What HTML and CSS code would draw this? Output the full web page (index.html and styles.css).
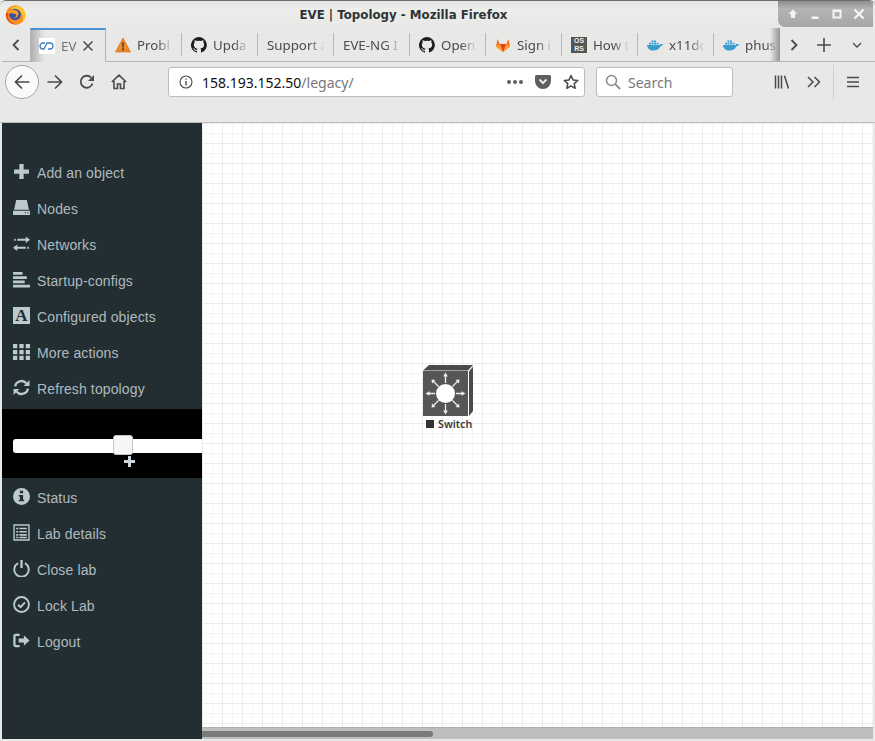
FILE: index.html
```html
<!DOCTYPE html>
<html lang="en">

<head>
    <meta charset="UTF-8" />
    <title>EVE | Topology - Mozilla Firefox</title>
    <link rel="stylesheet" href="styles.css">
</head>

<body>
    <div class="window">
        <header class="titlebar">
            <svg class="ff-logo" viewBox="0 0 21 21" width="21" height="21">
                <circle cx="10.500" cy="11" r="9.800" fill="#f7901e" />
                <path d="M4 1.500c.3 1.500 1 2.400 2 3 2-1.800 5-3 7.500-2.500 4 1 7 4.500 7 9 0 3-1.500 5.800-3.500 7.500 1.500-2.500 1.500-6 .2-8.500-.8-1.800-2.200-3-3.700-4-2-.5-4.500-1-6 .5z" fill="#fcc52d" />
                <path d="M1 9c-.5 4 1.500 8 5 10.200 2 1 4.500 1.500 7 1-4 0-8-2-9.500-6C3 12 3 10.500 3.500 9z" fill="#e6452c" />
                <circle cx="10" cy="10.500" r="5.800" fill="#3c4fa3" />
                <path d="M3.500 7.500c2-1.500 6-2.200 8-1 2 1.200 2.500 3.500 1.300 5.500-1 1.700-3.500 2.500-5.300 1.700 2 .1 3.500-.7 3.800-2 .2-1-.5-1.800-1.800-2-2-.3-4.300-.8-6 .3z" fill="#f9a01f" />
            </svg>
            <div class="title">EVE | Topology - Mozilla Firefox</div>
            <div class="wm-buttons">
                <svg viewBox="0 0 12 12" width="12" height="12"><path d="M6 1.500l4.500 4.500H8v4H4V6H1.500z" fill="#f4f4f4" /></svg>
                <svg viewBox="0 0 12 12" width="12" height="12"><path d="M2.500 8.500h7V11h-7z" fill="#f4f4f4" /></svg>
                <svg viewBox="0 0 12 12" width="12" height="12"><path d="M1.500 1.500h9v9h-9z M3.500 4v4.500h5V4z" fill="#f4f4f4" fill-rule="evenodd" /></svg>
                <svg viewBox="0 0 12 12" width="12" height="12"><path d="M1.500 1.500l9 9M10.500 1.500l-9 9" stroke="#f4f4f4" stroke-width="2.400" /></svg>
            </div>
        </header>

        <div class="tabbar">
            <button class="tab-nav tab-nav-left">
                <svg viewBox="0 0 12 12" width="12" height="12"><path d="M8.500 1L3.500 6l5 5" fill="none" stroke="#4a4a4f" stroke-width="1.800" /></svg>
            </button>
            <div class="tab tab-active">
                <span class="fav fav-eve">
                    <svg viewBox="0 0 16 12" width="16" height="12"><path d="M6 3H4a3 3 0 0 0 0 6h1l3-6h3a3 3 0 0 1 0 6h-2" fill="none" stroke="#3b7fc4" stroke-width="1.300" /></svg>
                </span>
                <span class="tab-label tab-label-short">EV</span>
                <svg class="tab-close" viewBox="0 0 10 10" width="10" height="10"><path d="M.5.500l9 9M9.500.500l-9 9" stroke="#4a4a4f" stroke-width="1.500" /></svg>
            </div>
            <div class="tab">
                <svg class="fav" viewBox="0 0 16 16" width="16" height="16">
                    <path d="M8 1l7.500 14H.5z" fill="#f08a24" stroke="#c9651a" stroke-width=".6" />
                    <path d="M7.200 5.500h1.600l-.3 5h-1z M7.100 11.500h1.800v1.800H7.100z" fill="#3a2a1a" />
                </svg>
                <span class="tab-label">Probl</span>
            </div>
            <div class="tab">
                <svg class="fav" viewBox="0 0 16 16" width="16" height="16"><use href="#gh" /></svg>
                <span class="tab-label">Upda</span>
            </div>
            <div class="tab"><span class="tab-label">Support a</span></div>
            <div class="tab"><span class="tab-label">EVE-NG I</span></div>
            <div class="tab">
                <svg class="fav" viewBox="0 0 16 16" width="16" height="16"><use href="#gh" /></svg>
                <span class="tab-label">Open</span>
            </div>
            <div class="tab">
                <svg class="fav" viewBox="0 0 16 16" width="16" height="16">
                    <path d="M8 15L1 9.500 2.500 2l2.300 5h6.400L13.500 2 15 9.500z" fill="#fc6d26" />
                    <path d="M8 15L4.800 7h6.400z" fill="#e24329" />
                    <path d="M1 9.500L4.800 7 8 15zM15 9.500L11.200 7 8 15z" fill="#fca326" />
                </svg>
                <span class="tab-label">Sign i</span>
            </div>
            <div class="tab">
                <span class="fav fav-osrs">OS<br>RS</span>
                <span class="tab-label">How t</span>
            </div>
            <div class="tab">
                <svg class="fav" viewBox="0 0 16 16" width="16" height="16"><use href="#whale" /></svg>
                <span class="tab-label">x11do</span>
            </div>
            <div class="tab tab-last">
                <svg class="fav" viewBox="0 0 16 16" width="16" height="16"><use href="#whale" /></svg>
                <span class="tab-label">phusi</span>
            </div>
            <button class="tab-nav tab-nav-right">
                <svg viewBox="0 0 12 12" width="12" height="12"><path d="M3.500 1l5 5-5 5" fill="none" stroke="#4a4a4f" stroke-width="1.800" /></svg>
            </button>
            <button class="tab-nav tab-nav-plus">
                <svg viewBox="0 0 14 14" width="14" height="14"><path d="M7 0v14M0 7h14" stroke="#4a4a4f" stroke-width="1.600" /></svg>
            </button>
            <button class="tab-nav tab-nav-list">
                <svg viewBox="0 0 10 6" width="10" height="6"><path d="M1 1l4 4 4-4" fill="none" stroke="#4a4a4f" stroke-width="1.300" /></svg>
            </button>
        </div>

        <nav class="navbar">
            <button class="back-btn">
                <svg viewBox="0 0 16 16" width="16" height="16"><path d="M8 1.500L1.500 8 8 14.500M2 8h13.500" fill="none" stroke="#4a4a4f" stroke-width="1.700" /></svg>
            </button>
            <button class="nav-btn nav-forward">
                <svg viewBox="0 0 16 16" width="16" height="16"><path d="M8 1.500L14.500 8 8 14.500M14 8H.5" fill="none" stroke="#4a4a4f" stroke-width="1.700" /></svg>
            </button>
            <button class="nav-btn nav-reload">
                <svg viewBox="0 0 16 16" width="16" height="16"><path d="M13.500 9.500A6 6 0 1 1 12 3.500" fill="none" stroke="#4a4a4f" stroke-width="1.800" /><path d="M15 1v6H9z" fill="#4a4a4f" /></svg>
            </button>
            <button class="nav-btn nav-home">
                <svg viewBox="0 0 16 16" width="16" height="16"><path d="M.8 8L8 1.200 15.200 8M3 7v7.500h3.500V10h3v4.500H13V7" fill="none" stroke="#4a4a4f" stroke-width="1.600" /></svg>
            </button>
            <div class="urlbar">
                <svg class="url-info" viewBox="0 0 14 14" width="14" height="14">
                    <circle cx="7" cy="7" r="6" fill="none" stroke="#4a4a4f" stroke-width="1.100" />
                    <path d="M6.300 6h1.400v4.500H6.300zM6.300 3.400h1.400v1.400H6.300z" fill="#4a4a4f" />
                </svg>
                <span class="url-text">158.193.152.50<span class="url-path">/legacy/</span></span>
                <span class="url-dots"><i></i><i></i><i></i></span>
                <svg class="url-pocket" viewBox="0 0 16 16" width="16" height="16">
                    <path d="M1.500 1h13A1.500 1.500 0 0 1 16 2.500V7a8 8 0 0 1-16 0V2.500A1.500 1.500 0 0 1 1.500 1z" fill="#5f5f62" />
                    <path d="M4.500 5.500L8 9l3.500-3.500" fill="none" stroke="#e8e8e7" stroke-width="2" />
                </svg>
                <svg class="url-star" viewBox="0 0 16 16" width="16" height="16"><path d="M8 1.500l2 4.400 4.800.5-3.600 3.200 1 4.700L8 11.900l-4.200 2.400 1-4.700L1.200 6.400 6 5.900z" fill="none" stroke="#4a4a4f" stroke-width="1.500" stroke-linejoin="round" /></svg>
            </div>
            <div class="searchbar">
                <svg viewBox="0 0 16 16" width="16" height="16"><circle cx="6.500" cy="6.500" r="5" fill="none" stroke="#8a8a8a" stroke-width="1.500" /><path d="M10.200 10.200L15 15" stroke="#8a8a8a" stroke-width="1.800" /></svg>
                <span>Search</span>
            </div>
            <button class="nav-btn nav-library">
                <svg viewBox="0 0 16 16" width="16" height="16"><path d="M1.500 1.500v13M4.500 1.500v13M7.500 1.500v13M10.500 1.700l4 12.800" fill="none" stroke="#4a4a4f" stroke-width="1.500" /></svg>
            </button>
            <button class="nav-btn nav-more">
                <svg viewBox="0 0 14 12" width="14" height="12"><path d="M1 1l5 5-5 5M7.500 1l5 5-5 5" fill="none" stroke="#4a4a4f" stroke-width="1.500" /></svg>
            </button>
            <span class="nav-sep"></span>
            <button class="nav-btn nav-menu">
                <svg viewBox="0 0 14 12" width="14" height="12"><path d="M1 1.500h12M1 6h12M1 10.500h12" stroke="#4a4a4f" stroke-width="1.500" /></svg>
            </button>
        </nav>

        <main class="page">
            <aside class="sidebar">
                <ul class="menu menu-top">
                    <li>
                        <svg viewBox="0 0 16 16"><path d="M6 1h4v5h5v4h-5v5H6v-5H1V6h5z" fill="currentColor" /></svg>
                        Add an object
                    </li>
                    <li>
                        <svg viewBox="0 0 16 16"><path d="M3 1h10l2 9H1z M0 11h16v4H0z" fill="currentColor" /><path d="M11 13h1M13.500 13h1" stroke="#232e33" stroke-width="1" /></svg>
                        Nodes
                    </li>
                    <li>
                        <svg viewBox="0 0 16 16"><path d="M4 3.500h8V1.500l4 3-4 3v-2H4zM1 3.500h1.500v2H1zM12 9v2h-8V9l-4 3 4 3v-2h8zM13.500 11H15v2h-1.500z" fill="currentColor" /></svg>
                        Networks
                    </li>
                    <li>
                        <svg viewBox="0 0 16 16"><path d="M0 1h9v2.500H0zM0 5h13v2.500H0zM0 9h11v2.500H0zM0 13h16v2.500H0z" fill="currentColor" /></svg>
                        Startup-configs
                    </li>
                    <li>
                        <span class="icon-font">A</span>
                        Configured objects
                    </li>
                    <li>
                        <svg viewBox="0 0 16 16"><path d="M0 1h4v4H0zM6 1h4v4H6zM12 1h4v4h-4zM0 6.500h4v4H0zM6 6.500h4v4H6zM12 6.500h4v4h-4zM0 12h4v4H0zM6 12h4v4H6zM12 12h4v4h-4z" fill="currentColor" /></svg>
                        More actions
                    </li>
                    <li>
                        <svg viewBox="0 0 16 16"><path d="M2 7a6 6 0 0 1 10.500-3M14 9a6 6 0 0 1-10.500 3" fill="none" stroke="currentColor" stroke-width="2.200" /><path d="M15.500 1v5.500H10zM.5 15V9.500H6z" fill="currentColor" /></svg>
                        Refresh topology
                    </li>
                </ul>

                <div class="zoom-panel">
                    <div class="zoom-track"></div>
                    <div class="zoom-thumb"></div>
                    <svg class="zoom-plus" viewBox="0 0 11 11" width="11" height="11"><path d="M4 0h3v4h4v3H7v4H4V7H0V4h4z" fill="#c8d6dc" /></svg>
                </div>

                <ul class="menu">
                    <li>
                        <svg viewBox="0 0 16 16"><path fill-rule="evenodd" d="M8 0a8 8 0 1 1 0 16A8 8 0 0 1 8 0zM6.500 2.500v2.500h3V2.500zM5.500 6.500V8h1v3h-1v1.500h5V11h-1V6.500z" fill="currentColor" /></svg>
                        Status
                    </li>
                    <li>
                        <svg viewBox="0 0 16 16"><path d="M1 1h14v14H1z" fill="none" stroke="currentColor" stroke-width="1.300" /><path d="M3 3.500h2v1.500H3zM6 3.500h7v1.500H6zM3 6.500h2V8H3zM6 6.500h7V8H6zM3 9.500h2V11H3zM6 9.500h7V11H6zM3 12h2v1.300H3zM6 12h7v1.300H6z" fill="currentColor" /></svg>
                        Lab details
                    </li>
                    <li>
                        <svg viewBox="0 0 16 16"><path d="M4.800 3a6.800 6.800 0 1 0 6.400 0" fill="none" stroke="currentColor" stroke-width="1.800" /><path d="M8 0v7.500" stroke="currentColor" stroke-width="2.200" /></svg>
                        Close lab
                    </li>
                    <li>
                        <svg viewBox="0 0 16 16"><circle cx="8" cy="8" r="7" fill="none" stroke="currentColor" stroke-width="1.800" /><path d="M4.800 8.200l2.300 2.300 4.200-4.500" fill="none" stroke="currentColor" stroke-width="1.800" /></svg>
                        Lock Lab
                    </li>
                    <li>
                        <svg viewBox="0 0 18 16"><path d="M7 2H3a1.500 1.500 0 0 0-1.500 1.500v9A1.500 1.500 0 0 0 3 14h4" fill="none" stroke="currentColor" stroke-width="2.400" /><path d="M6 6h5.500V2.500L17.500 8l-6 5.500V10H6z" fill="currentColor" /></svg>
                        Logout
                    </li>
                </ul>
            </aside>

            <section class="canvas-wrap">
                <div class="canvas">
                    <div class="node">
                        <svg class="node-icon" viewBox="0 0 50 52" width="50" height="52">
                            <path d="M0 5.500L6 0h44l-5 5.500z" fill="#4a4a4a" />
                            <path d="M46 6.500L50 1.500V46l-4 5z" fill="#4a4a4a" />
                            <path d="M0 6h45v45H0z" fill="#565656" />
                            <path d="M22.500 11v7M22.500 39v7M6 28.500h6M33 28.500h6M15.500 21.500l-6-6M29.500 21.500l6-6M15.500 35.500l-6 6M29.500 35.500l6 6" stroke="#eee" stroke-width="1.300" />
                            <path d="M22.500 7.500l-2.300 4h4.600zM22.500 49.500l-2.300-4h4.600zM2.500 28.500l4-2.300v4.600zM42.500 28.500l-4-2.300v4.600zM8.500 14.500l4 .5-3.500 3.500zM36.500 14.500l-4 .5 3.500 3.500zM8.500 42.500l4-.5-3.500-3.500zM36.500 42.500l-4-.5 3.500-3.500z" fill="#eee" />
                            <circle cx="22.500" cy="28.500" r="9.500" fill="#fff" />
                        </svg>
                        <div class="node-label"><span class="node-state"></span>Switch</div>
                    </div>
                </div>
                <div class="scrollbar"><div class="scroll-thumb"></div></div>
            </section>
        </main>
    </div>

    <svg class="defs" width="0" height="0">
        <defs>
            <symbol id="gh" viewBox="0 0 16 16">
                <path d="M8 0a8 8 0 0 0-2.500 15.600c.4.100.5-.2.500-.4v-1.400c-2.200.5-2.700-1-2.700-1-.4-.9-.9-1.200-.9-1.200-.7-.5.100-.5.100-.5.800.1 1.200.8 1.200.8.700 1.200 1.900.9 2.300.7.100-.5.300-.9.500-1.100-1.800-.2-3.600-.9-3.600-4 0-.9.300-1.600.8-2.100-.1-.2-.4-1 .1-2.100 0 0 .7-.2 2.200.8a7.500 7.500 0 0 1 4 0c1.500-1 2.200-.8 2.200-.8.400 1.100.2 1.900.1 2.100.5.600.8 1.300.8 2.100 0 3.100-1.900 3.700-3.700 3.900.3.300.6.800.6 1.500v2.200c0 .2.100.5.600.4A8 8 0 0 0 8 0z" fill="#1b1f23" />
            </symbol>
            <symbol id="whale" viewBox="0 0 16 16">
                <path d="M0 8h12.500c.4-.8 1.500-1.200 3.500-.8-.5 1.500-1.500 2-2.500 2C12.300 12 10 13.500 6.500 13.500 2.500 13.500.3 11.500 0 8z" fill="#3a9fd0" />
                <path d="M2 5.800h2v1.700H2zM4.500 5.800h2v1.700h-2zM7 5.800h2v1.700H7zM4.500 3.600h2v1.700h-2zM7 3.600h2v1.700H7zM9.500 5.800h2v1.700h-2z" fill="#3a9fd0" />
            </symbol>
        </defs>
    </svg>
</body>

</html>
```

FILE: styles.css
```css
html,
body {
    margin: 0;
    padding: 0;
    background-color: #e8e8e7;
}

button {
    margin: 0;
    padding: 0;
    border: 0;
    background: none;
    display: flex;
    align-items: center;
    justify-content: center;
}

.defs {
    position: absolute;
}

.window {
    width: 875px;
    height: 741px;
    overflow: hidden;
    display: flex;
    flex-direction: column;
    box-sizing: border-box;
    background-color: #e8e8e7;
    border-top: 1px solid #6e6e6e;
    border-radius: 6px 6px 0 0;
    font-family: "Noto Sans", sans-serif;
}

/* title bar */
.titlebar {
    height: 27px;
    flex: none;
    display: flex;
    align-items: flex-start;
    position: relative;
    background: linear-gradient(#e4e4e3, #ededec 30%, #e8e8e7);
}

.ff-logo {
    margin: 3px 0 0 5px;
}

.title {
    position: absolute;
    left: 0;
    right: 68px;
    top: 7px;
    text-align: center;
    font-family: "DejaVu Sans", sans-serif;
    font-size: 11.800px;
    font-weight: bold;
    color: #2e3436;
}

.wm-buttons {
    position: absolute;
    right: 2px;
    top: 0;
    width: 95px;
    height: 26px;
    box-sizing: border-box;
    padding-left: 9px;
    display: flex;
    align-items: center;
    gap: 10px;
    background: linear-gradient(#8e8e8e, #b4b4b4 30%, #a6a6a6);
    border-radius: 0 0 0 7px;
}

/* tabs */
.tabbar {
    height: 34px;
    flex: none;
    display: flex;
    box-sizing: border-box;
    border-bottom: 1px solid #b4b4b4;
    margin-left: 2px;
}

.tab-nav {
    flex: none;
    height: 33px;
}

.tab-nav-left {
    width: 28px;
}

.tab-nav-right {
    width: 28px;
}

.tab-nav-plus {
    width: 32px;
}

.tab-nav-list {
    width: 33px;
}

.tab {
    width: 76px;
    flex: none;
    height: 23px;
    margin-top: 5px;
    box-sizing: border-box;
    padding-left: 9px;
    display: flex;
    align-items: center;
    gap: 6px;
    border-right: 1px solid #b8b8b8;
    font-size: 13.300px;
    color: #4a4a4f;
    position: relative;
}

.tab-last {
    width: 66px;
    border-right: 0;
}

/* shadow where the tab strip scrolls under the arrow */
.tab-last::after {
    content: "";
    position: absolute;
    right: 0;
    top: -5px;
    width: 10px;
    height: 33px;
    background: linear-gradient(90deg, rgba(120, 120, 120, 0), rgba(120, 120, 120, .75));
}

.tab-active {
    margin-top: 0;
    margin-bottom: -1px;
    height: 34px;
    padding-left: 8px;
    gap: 6px;
    border-top: 2px solid #4a90d9;
    border-left: 1px solid #b4b4b4;
    border-right: 1px solid #b4b4b4;
    background: linear-gradient(90deg, #b0b0b0, #e8e8e7 14px);
}

.fav {
    flex: none;
    width: 16px;
    height: 16px;
}

.fav-eve {
    background-color: #fff;
    display: flex;
    align-items: center;
    justify-content: center;
}

.fav-osrs {
    box-sizing: border-box;
    background-color: #555;
    color: #eee;
    font-family: "Liberation Sans", sans-serif;
    font-size: 7px;
    font-weight: bold;
    line-height: 8px;
    text-align: center;
}

.tab-label {
    flex: 1;
    min-width: 0;
    white-space: nowrap;
    color: #4a4a4f;
    -webkit-mask-image: linear-gradient(270deg, transparent 8px, #000 24px);
    mask-image: linear-gradient(270deg, transparent 8px, #000 24px);
}

.tab-last .tab-label {
    -webkit-mask-image: linear-gradient(270deg, transparent 1px, #000 14px);
    mask-image: linear-gradient(270deg, transparent 1px, #000 14px);
}

.tab-label-short {
    flex: none;
    width: 16px;
    opacity: .75;
    -webkit-mask-image: none;
    mask-image: none;
}

.tab-close {
    flex: none;
}

/* toolbar */
.navbar {
    height: 61px;
    flex: none;
    box-sizing: border-box;
    padding: 3px 0 0 5px;
    display: flex;
    align-items: flex-start;
    border-bottom: 1px solid #bcbcbc;
}

.back-btn {
    width: 34px;
    height: 34px;
    flex: none;
    box-sizing: border-box;
    background-color: #fafafa;
    border: 1px solid #a8a8a8;
    border-radius: 50%;
}

.nav-btn {
    flex: none;
    width: 32px;
    height: 34px;
}

.urlbar {
    width: 417px;
    height: 30px;
    flex: none;
    margin: 2px 0 0 33px;
    box-sizing: border-box;
    padding: 0 5px 0 10px;
    display: flex;
    align-items: center;
    background-color: #fff;
    border: 1px solid #bcbcbc;
    border-radius: 3px;
    font-size: 14px;
}

.url-text {
    margin-left: 9px;
    flex: 1;
    color: #111;
}

.url-path {
    color: #77777a;
}

.url-dots {
    display: flex;
    gap: 2px;
    margin-right: 12px;
}

.url-dots i {
    width: 4px;
    height: 4px;
    border-radius: 50%;
    background-color: #5f5f62;
}

.url-pocket {
    margin-right: 12px;
}

.searchbar {
    width: 137px;
    height: 30px;
    flex: none;
    margin: 2px 37px 0 11px;
    box-sizing: border-box;
    padding-left: 8px;
    display: flex;
    align-items: center;
    gap: 7px;
    background-color: #fff;
    border: 1px solid #bcbcbc;
    border-radius: 3px;
    font-size: 14px;
    color: #77777a;
}

.nav-library {
    width: 24px;
}

.nav-more {
    width: 39px;
}

.nav-sep {
    width: 1px;
    height: 34px;
    flex: none;
    background-color: #cfcfcf;
}

.nav-menu {
    width: 38px;
}

/* page area */
.page {
    flex: 1;
    min-height: 0;
    display: flex;
    padding: 0 2px 2px;
}

.sidebar {
    width: 200px;
    flex: none;
    background-color: #232e33;
    box-sizing: border-box;
    padding-top: 32px;
}

.menu {
    list-style: none;
    margin: 0;
    padding: 2px 0 0;
    font-family: "Liberation Sans", sans-serif;
    font-size: 14px;
    letter-spacing: .12px;
    color: #aebabf;
}

.menu-top {
    padding: 0 0 2px;
}

.menu li {
    height: 36px;
    padding-left: 11px;
    display: flex;
    align-items: center;
    gap: 7px;
}

.menu svg {
    width: 17px;
    height: 17px;
    flex: none;
    margin-top: -4px;
    color: #bccacf;
}

.icon-font {
    width: 17px;
    height: 17px;
    flex: none;
    margin-top: -4px;
    background-color: #bccacf;
    color: #232e33;
    font-family: "Liberation Serif", serif;
    font-size: 17px;
    font-weight: bold;
    line-height: 17px;
    text-align: center;
}

.zoom-panel {
    height: 69px;
    background-color: #000;
    position: relative;
}

.zoom-track {
    position: absolute;
    left: 11px;
    right: 0;
    top: 30px;
    height: 14px;
    background-color: #fff;
    border-radius: 3px 0 0 3px;
}

.zoom-thumb {
    position: absolute;
    left: 111px;
    top: 26px;
    width: 20px;
    height: 20px;
    box-sizing: border-box;
    background-color: #f6f6f6;
    border: 1px solid #c5c5c5;
    border-radius: 3px;
}

.zoom-plus {
    position: absolute;
    left: 122px;
    top: 47px;
}

.canvas-wrap {
    flex: 1;
    min-width: 0;
    display: flex;
    flex-direction: column;
}

.canvas {
    flex: 1;
    position: relative;
    background-color: #fff;
    background-image:
        linear-gradient(90deg, #ececec 1px, transparent 1px),
        linear-gradient(#ececec 1px, transparent 1px),
        linear-gradient(90deg, #f4f4f4 1px, transparent 1px),
        linear-gradient(#f4f4f4 1px, transparent 1px);
    background-size: 20px 20px, 20px 20px, 10px 10px, 10px 10px;
}

.node {
    position: absolute;
    left: 221px;
    top: 242px;
    width: 52px;
}

.node-icon {
    display: block;
}

.node-label {
    margin-top: 0;
    padding-left: 3px;
    display: flex;
    align-items: center;
    gap: 4px;
    font-size: 10.700px;
    font-weight: 600;
    line-height: 14px;
    color: #3a3a3a;
    white-space: nowrap;
}

.node-state {
    width: 8px;
    height: 8px;
    flex: none;
    background-color: #333;
}

.scrollbar {
    height: 12px;
    flex: none;
    box-sizing: border-box;
    padding-top: 3px;
    background-color: #bdbfbd;
    border-top: 1px solid #b0b0b0;
}

.scroll-thumb {
    width: 231px;
    height: 6px;
    background-color: #7a7a7a;
    border-radius: 0 3px 3px 0;
}
```
